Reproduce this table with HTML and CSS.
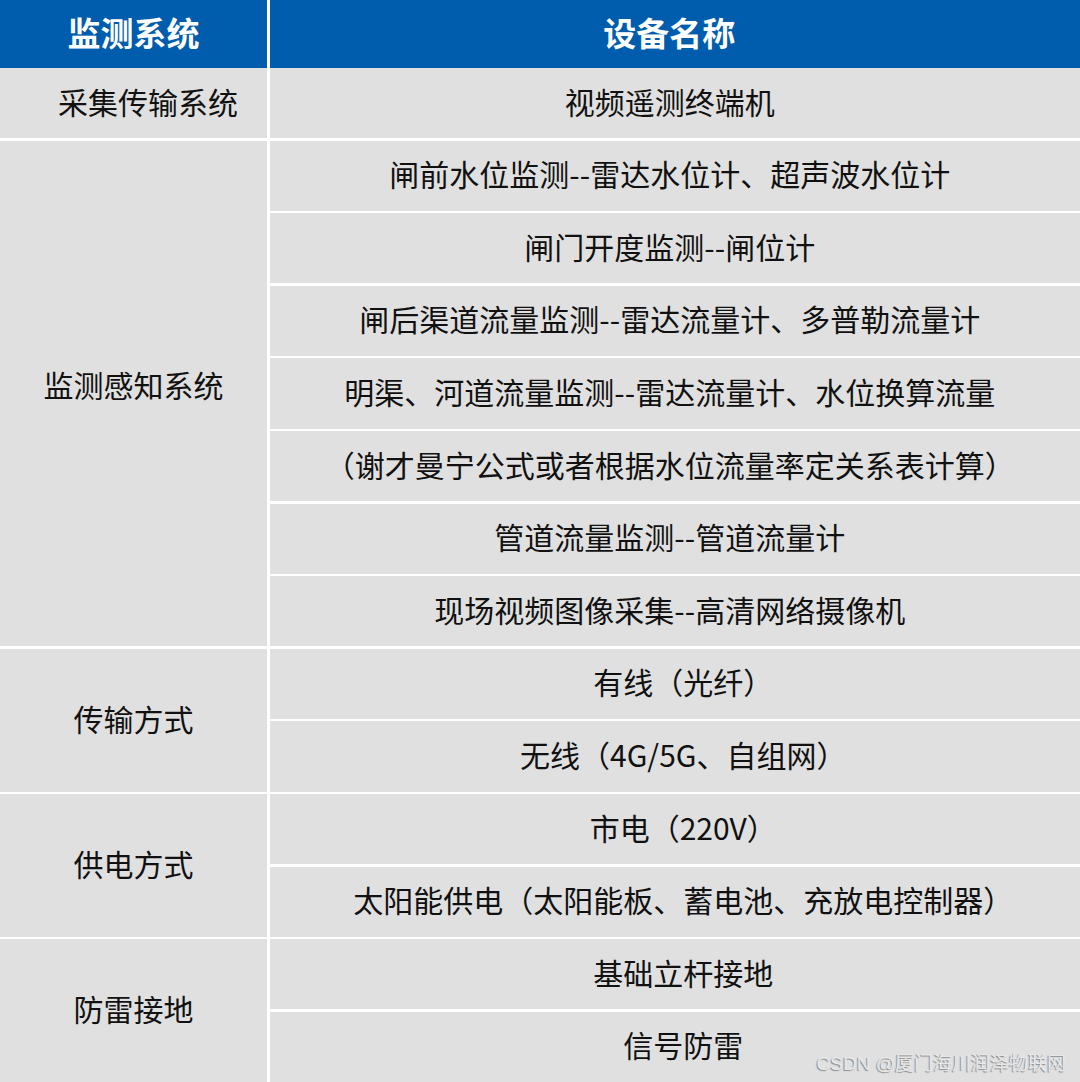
FILE: index.html
```html
<!DOCTYPE html>
<html lang="zh-CN">
<head>
<meta charset="utf-8">
<title>监测系统设备表</title>
<link rel="stylesheet" href="styles.css">
</head>
<body>
<div class="page">
  <div class="head">
    <div class="hcell hleft">监测系统</div>
    <div class="hcell hright">设备名称</div>
  </div>
  <div class="body">
    <div class="cell left shift-l">采集传输系统</div>
    <div class="cell right a">视频遥测终端机</div>

    <div class="cell left span7 lift">监测感知系统</div>
    <div class="cell right a">闸前水位监测--雷达水位计、超声波水位计</div>
    <div class="cell right a">闸门开度监测--闸位计</div>
    <div class="cell right a">闸后渠道流量监测--雷达流量计、多普勒流量计</div>
    <div class="cell right a">明渠、河道流量监测--雷达流量计、水位换算流量</div>
    <div class="cell right a">（谢才曼宁公式或者根据水位流量率定关系表计算）</div>
    <div class="cell right a">管道流量监测--管道流量计</div>
    <div class="cell right a">现场视频图像采集--高清网络摄像机</div>

    <div class="cell left span2">传输方式</div>
    <div class="cell right b">有线（光纤）</div>
    <div class="cell right b">无线（4G/5G、自组网）</div>

    <div class="cell left span2">供电方式</div>
    <div class="cell right b">市电（220V）</div>
    <div class="cell right b">太阳能供电（太阳能板、蓄电池、充放电控制器）</div>

    <div class="cell left span2">防雷接地</div>
    <div class="cell right b">基础立杆接地</div>
    <div class="cell right b">信号防雷</div>
  </div>
  <div class="watermark">CSDN @厦门海川润泽物联网</div>
</div>
</body>
</html>
```
FILE: styles.css
```css
html, body {
  margin: 0;
  padding: 0;
  background: #ffffff;
}
.page {
  position: relative;
  width: 1080px;
  height: 1082px;
  display: flex;
  flex-direction: column;
  font-family: "Noto Sans CJK SC", "Noto Sans", sans-serif;
  overflow: hidden;
}
.head {
  height: 68px;
  flex: 0 0 68px;
  display: grid;
  grid-template-columns: 267px 1fr;
  column-gap: 2.5px;
  background: #ffffff;
}
.hcell {
  background: #005cac;
  color: #ffffff;
  font-weight: 700;
  font-size: 33px;
  display: flex;
  align-items: center;
  justify-content: center;
  padding-bottom: 5px;
  box-sizing: border-box;
}
.hright {
  padding-right: 11px;
}
.body {
  flex: 1 1 auto;
  display: grid;
  grid-template-columns: 267px 1fr;
  grid-template-rows: repeat(14, 1fr);
  column-gap: 2.5px;
  row-gap: 2.5px;
  background: #ffffff;
}
.cell {
  background: #e0e0e0;
  color: #111111;
  font-size: 30px;
  display: flex;
  align-items: center;
  justify-content: center;
  white-space: nowrap;
  padding-bottom: 5px;
  box-sizing: border-box;
}
.left {
  grid-column: 1;
}
.right {
  grid-column: 2;
}
.span7 {
  grid-row: span 7;
}
.span2 {
  grid-row: span 2;
}
.lift {
  padding-bottom: 18px;
}
.shift-l {
  padding-left: 29px;
}
.a {
  padding-right: 10px;
}
.b {
  padding-left: 17px;
}
.watermark {
  position: absolute;
  right: 14px;
  bottom: 7px;
  font-family: "Liberation Sans", "Noto Sans CJK SC", sans-serif;
  font-size: 19px;
  color: #e8e8e8;
  text-shadow: -1px 1px 1px #8a8a8a;
}
```
